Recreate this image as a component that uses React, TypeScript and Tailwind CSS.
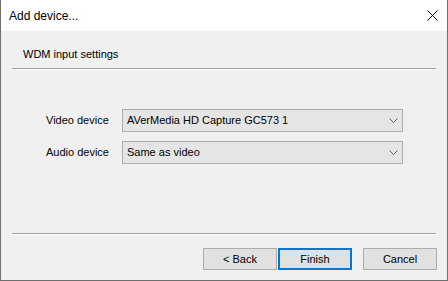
const fontClass = "font-['Segoe_UI','Liberation_Sans',Arial,sans-serif] text-[11px] text-black";

function Chevron() {
  return (
    <svg width="9" height="5" viewBox="0 0 9 5" className="text-[#606060]">
      <path d="M0.5 0.5 L4.5 4.5 L8.5 0.5" fill="none" stroke="currentColor" strokeWidth="1" />
    </svg>
  );
}

function ComboBox({ value }: { value: string }) {
  return (
    <div className="flex h-[23px] w-[281px] items-center justify-between border border-[#adadad] bg-[#e5e5e5] pr-[4px] pl-[4px]">
      <span className="leading-none">{value}</span>
      <Chevron />
    </div>
  );
}

function Field({ label, value }: { label: string; value: string }) {
  return (
    <div className="flex items-center">
      <span className="w-[76px] leading-none">{label}</span>
      <ComboBox value={value} />
    </div>
  );
}

function DialogButton({ label, primary }: { label: string; primary?: boolean }) {
  return (
    <button
      type="button"
      className={
        primary
          ? "flex h-[22px] w-[74px] items-center justify-center border-2 border-[#0078d7] bg-[#e1e1e1] leading-none"
          : "flex h-[22px] w-[74px] items-center justify-center border border-[#adadad] bg-[#e1e1e1] leading-none"
      }>
      {label}
    </button>
  );
}

function Separator() {
  return (
    <div className="mx-[11px]">
      <div className="h-px bg-[#a0a0a0]" />
      <div className="h-px bg-white" />
    </div>
  );
}

export default function App() {
  return (
    <div className={`flex h-[281px] w-[448px] flex-col border-x border-b border-[#6f6f6f] ${fontClass}`}>
      <div className="flex h-[31px] shrink-0 items-center justify-between bg-white pr-[9px] pl-[8px] text-[12px]">
        <span className="leading-none">Add device...</span>
        <svg width="11" height="11" viewBox="0 0 11 11">
          <path d="M0.5 0.5 L10.5 10.5 M10.5 0.5 L0.5 10.5" stroke="#000" strokeWidth="1" />
        </svg>
      </div>

      <div className="flex flex-1 flex-col bg-[#f0f0f0]">
        <div className="pt-[18px] pl-[22px] leading-none">WDM input settings</div>
        <div className="mt-[8px]">
          <Separator />
        </div>

        <div className="mt-[39px] flex flex-col gap-[9px] pl-[45px]">
          <Field label="Video device" value="AVerMedia HD Capture GC573 1" />
          <Field label="Audio device" value="Same as video" />
        </div>

        <div className="mt-auto">
          <Separator />
          <div className="mt-[13px] mb-[10px] flex justify-end pr-[10px]">
            <DialogButton label="< Back" />
            <div className="ml-[1px]">
              <DialogButton label="Finish" primary />
            </div>
            <div className="ml-[11px]">
              <DialogButton label="Cancel" />
            </div>
          </div>
        </div>
      </div>
    </div>
  );
}
